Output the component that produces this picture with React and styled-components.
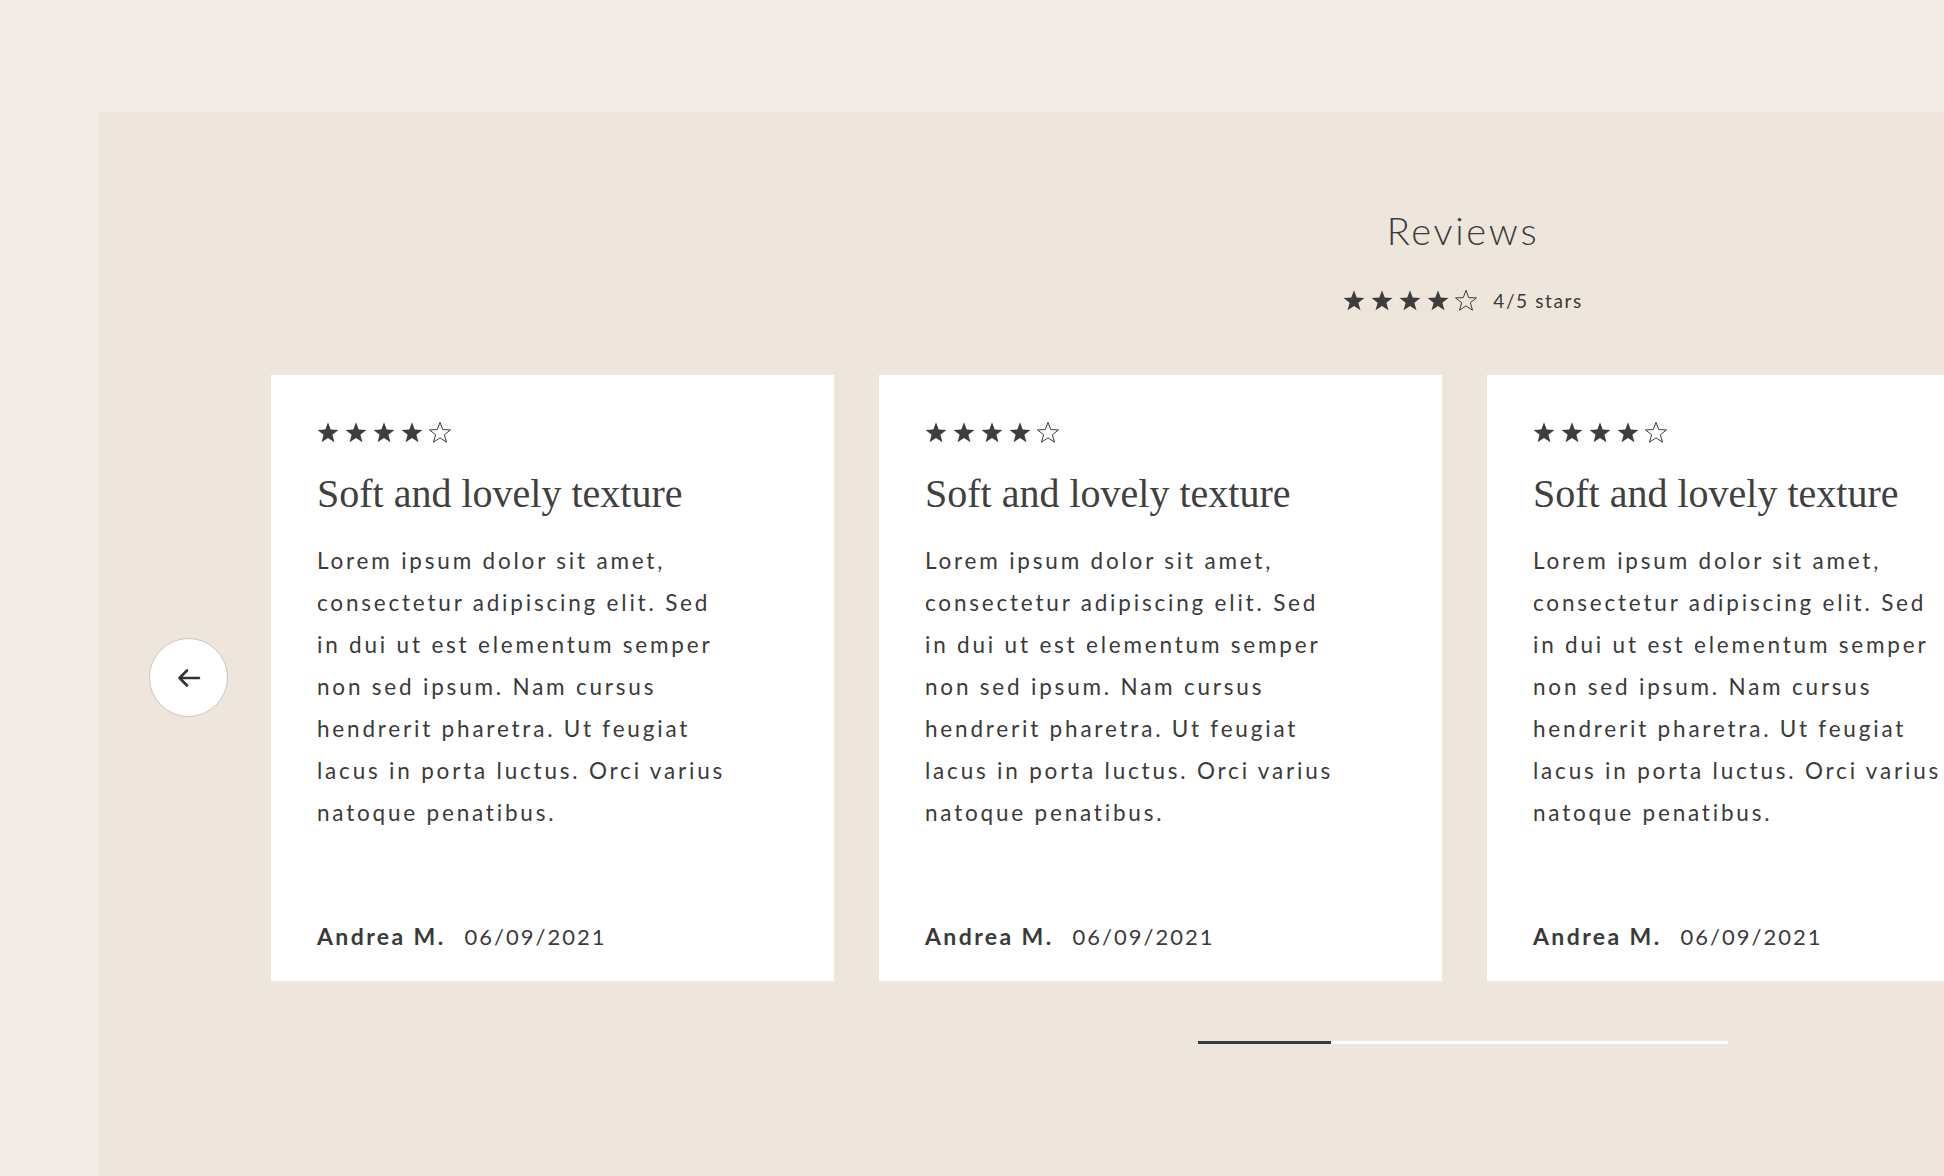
import React from "react";
import styled, { createGlobalStyle } from "styled-components";

const GlobalStyle = createGlobalStyle`
  html, body {
    margin: 0;
    padding: 0;
    background: #f3ece6;
    overflow: hidden;
  }
  body {
    font-family: "Lato", "Liberation Sans", sans-serif;
    color: #3a3a3a;
  }
  * { box-sizing: border-box; }
`;

const Page = styled.div`
  min-height: 1176px;
  padding: 112px 0 0 99px;
`;

const Panel = styled.section`
  width: 2728px;
  min-height: 1064px;
  background: #eee6dc;
  padding-top: 96px;
  display: flex;
  flex-direction: column;
`;

const Header = styled.header`
  display: flex;
  flex-direction: column;
  align-items: center;
`;

const Title = styled.h2`
  margin: 0;
  font-family: "Lato", sans-serif;
  font-weight: 300;
  font-size: 38px;
  line-height: 1.2;
  letter-spacing: 2.7px;
  color: #3a3a3a;
`;

const Summary = styled.div`
  margin-top: 37px;
  display: flex;
  align-items: center;
  gap: 16px;
  height: 20px;
`;

const SummaryText = styled.span`
  font-size: 19px;
  line-height: 20px;
  letter-spacing: 1.6px;
  color: #3a3a3a;
`;

const StarRow = styled.div`
  display: flex;
  gap: 6px;
  height: 21px;
  align-items: center;
`;

const Carousel = styled.div`
  margin-top: 64px;
  padding-left: 50px;
  display: flex;
  align-items: center;
  gap: 43px;
`;

const ArrowButton = styled.button`
  flex: none;
  width: 79px;
  height: 79px;
  border-radius: 50%;
  background: #ffffff;
  border: 1px solid #cbc6bf;
  display: flex;
  align-items: center;
  justify-content: center;
  padding: 0;
  cursor: pointer;
`;

const Track = styled.div`
  display: flex;
  gap: 45px;
`;

const Card = styled.article`
  flex: none;
  width: 563px;
  height: 606px;
  background: #ffffff;
  padding: 47px 46px 31px 46px;
  display: flex;
  flex-direction: column;
`;

const CardTitle = styled.h3`
  margin: 27px 0 0 0;
  font-family: "Liberation Serif", "Times New Roman", serif;
  font-weight: 400;
  font-size: 40px;
  line-height: 48px;
  color: #404040;
`;

const Body = styled.p`
  margin: 22px 0 0 0;
  font-size: 22.5px;
  line-height: 42px;
  letter-spacing: 2.8px;
  color: #3a3a3a;
  max-width: 418px;
`;

const Footer = styled.div`
  margin-top: auto;
  display: flex;
  align-items: baseline;
  gap: 19px;
  line-height: 26px;
`;

const Author = styled.span`
  font-size: 23px;
  font-weight: 700;
  letter-spacing: 2.4px;
  color: #3a3a3a;
`;

const DateText = styled.span`
  font-size: 22px;
  font-weight: 400;
  letter-spacing: 2px;
  color: #3a3a3a;
`;

const Progress = styled.div`
  align-self: center;
  margin-top: 60px;
  width: 530px;
  height: 3px;
  background: #ffffff;
  display: flex;
`;

const ProgressFill = styled.div`
  height: 100%;
  background: #3a3a3a;
`;

function starPoints(cx, cy, R, r) {
  const pts = [];
  for (let i = 0; i < 10; i++) {
    const a = (-90 + i * 36) * (Math.PI / 180);
    const rad = i % 2 === 0 ? R : r;
    pts.push(`${(cx + rad * Math.cos(a)).toFixed(2)},${(cy + rad * Math.sin(a)).toFixed(2)}`);
  }
  return pts.join(" ");
}

const STAR = starPoints(11, 11.3, 11, 4.6);

function Star({ filled }) {
  return (
    <svg width="22" height="21" viewBox="0 0 22 21" aria-hidden="true">
      <polygon
        points={STAR}
        fill={filled ? "#3d3d3d" : "none"}
        stroke="#3d3d3d"
        strokeWidth={filled ? 0 : 1}
        strokeLinejoin="miter"
      />
    </svg>
  );
}

function Stars({ value }) {
  return (
    <StarRow>
      {[0, 1, 2, 3, 4].map((i) => (
        <Star key={i} filled={i < value} />
      ))}
    </StarRow>
  );
}

function ArrowLeft() {
  return (
    <svg width="24" height="20" viewBox="0 0 24 20" aria-hidden="true">
      <path
        d="M2.5 10H22M10 2.5L2.5 10L10 17.5"
        fill="none"
        stroke="#333333"
        strokeWidth="2.6"
        strokeLinecap="round"
        strokeLinejoin="round"
      />
    </svg>
  );
}

const reviews = Array.from({ length: 5 }, () => ({
  rating: 4,
  title: "Soft and lovely texture",
  body:
    "Lorem ipsum dolor sit amet, consectetur adipiscing elit. Sed in dui ut est elementum semper non sed ipsum. Nam cursus hendrerit pharetra. Ut feugiat lacus in porta luctus. Orci varius natoque penatibus.",
  author: "Andrea M.",
  date: "06/09/2021",
}));

export default function App() {
  return (
    <>
      <GlobalStyle />
      <Page>
        <Panel>
          <Header>
            <Title>Reviews</Title>
            <Summary>
              <Stars value={4} />
              <SummaryText>4/5 stars</SummaryText>
            </Summary>
          </Header>
          <Carousel>
            <ArrowButton aria-label="Previous">
              <ArrowLeft />
            </ArrowButton>
            <Track>
              {reviews.map((r, i) => (
                <Card key={i}>
                  <Stars value={r.rating} />
                  <CardTitle>{r.title}</CardTitle>
                  <Body>{r.body}</Body>
                  <Footer>
                    <Author>{r.author}</Author>
                    <DateText>{r.date}</DateText>
                  </Footer>
                </Card>
              ))}
            </Track>
          </Carousel>
          <Progress>
            <ProgressFill style={{ width: `${(1 / 4) * 100}%` }} />
          </Progress>
        </Panel>
      </Page>
    </>
  );
}
